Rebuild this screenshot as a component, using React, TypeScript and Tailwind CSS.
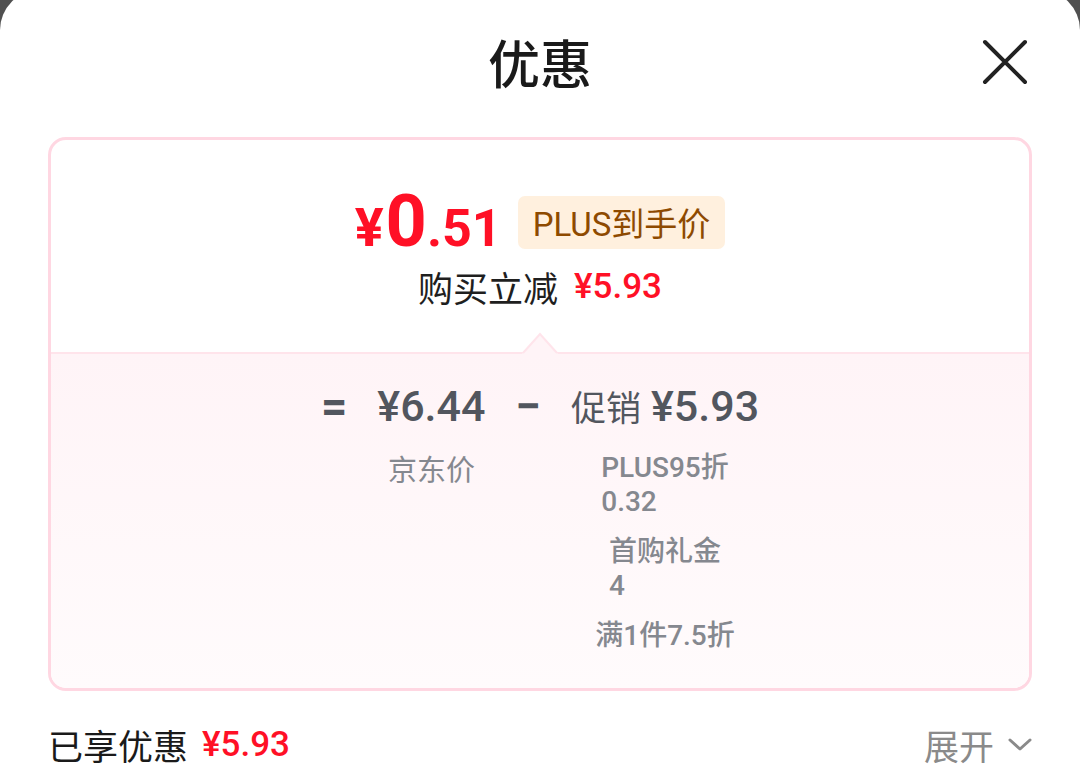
import React from "react";

const CJK = "font-['Noto_Sans_CJK_SC',sans-serif]";
const NUM = "font-['Roboto','Noto_Sans_CJK_SC',sans-serif]";

interface Discount {
  name: string;
  amount?: string;
}

const DISCOUNTS: Discount[] = [
  { name: "PLUS95折", amount: "0.32" },
  { name: "首购礼金", amount: "4" },
  { name: "满1件7.5折" },
];

function CloseIcon() {
  return (
    <svg width="48" height="48" viewBox="0 0 48 48" fill="none">
      <path d="M4 4 L44 44 M44 4 L4 44" stroke="#222" strokeWidth="4" strokeLinecap="round" />
    </svg>
  );
}

function Chevron() {
  return (
    <svg width="24" height="14" viewBox="0 0 24 14" fill="none">
      <path d="M2 2 L12 11 L22 2" stroke="#8a8a8a" strokeWidth="3" strokeLinecap="round" strokeLinejoin="round" />
    </svg>
  );
}

export default function App() {
  return (
    <div className="w-[1080px] h-[772px] bg-[#505050] overflow-hidden">
      <div className="-mt-[10px] h-[782px] bg-white rounded-t-[40px] flex flex-col">
        {/* header */}
        <div className="h-[144px] grid grid-cols-[1fr_auto_1fr] items-center">
          <div />
          <h1 className={`${CJK} text-[52px] leading-none text-[#1a1a1a] font-medium`}>优惠</h1>
          <div className="flex justify-end pr-[51px]">
            <CloseIcon />
          </div>
        </div>

        {/* card */}
        <div className="mt-[3px] mx-[48px] border-[3px] border-[#ffd7e2] rounded-[18px] overflow-hidden">
          <div className="h-[212px] flex flex-col items-center pt-[46px]">
            <div className="flex items-center">
              <span className={`${NUM} text-[#ff1026] font-bold flex items-baseline leading-none`}>
                <span className="text-[54px]">¥</span>
                <span className="text-[72px] ml-[2px]">0</span>
                <span className="text-[52px]">.51</span>
              </span>
              <span className={`${CJK} ml-[16px] h-[53px] px-[15px] rounded-[7px] bg-[#fff0de] text-[#8e4a00] text-[33px] leading-[53px]`}>
                <span className={NUM}>PLUS</span>到手价
              </span>
            </div>
            <div className="mt-[9px] flex items-center leading-[40px]">
              <span className={`${CJK} text-[35px] text-[#1f1f1f]`}>购买立减</span>
              <span className={`${NUM} ml-[16px] text-[35px] text-[#ff1026] font-medium`}>¥5.93</span>
            </div>
          </div>

          <div className="relative border-t-[2px] border-[#ffe4eb] bg-gradient-to-b from-[#fff4f7] to-[#fffbfc] pt-[26px] pb-[35px]">
            <svg className="absolute -top-[22px] left-1/2 -ml-[18px]" width="36" height="22" viewBox="0 0 36 22">
              <polygon points="0,22 18,2 36,22" fill="#fff4f7" />
              <polyline points="1,21 18,2 35,21" fill="none" stroke="#ffe4eb" strokeWidth="2" />
            </svg>
            <div className="flex justify-center items-start gap-[30px] text-[#52565e]">
              <span className={`${NUM} text-[46px] leading-[52px] font-bold`}>=</span>
              <div className="flex flex-col items-center">
                <span className={`${NUM} text-[43px] leading-[52px] font-medium`}>¥6.44</span>
                <span className={`${CJK} mt-[19px] text-[29px] leading-[34px] text-[#85888f]`}>京东价</span>
              </div>
              <span className={`${NUM} text-[46px] leading-[52px] font-bold`}>−</span>
              <div className="flex flex-col items-center">
                <span className="leading-[52px] flex items-baseline">
                  <span className={`${CJK} text-[35px]`}>促销</span>
                  <span className={`${NUM} ml-[10px] text-[43px] font-medium`}>¥5.93</span>
                </span>
                <div className="mt-[19px] flex flex-col items-center gap-[16px]">
                  {DISCOUNTS.map((d, i) => (
                    <div
                      key={i}
                      className={`${NUM} max-w-[140px] text-left text-[28px] leading-[34px] font-medium text-[#85888f]`}
                    >
                      <div>{d.name}</div>
                      {d.amount && <div>{d.amount}</div>}
                    </div>
                  ))}
                </div>
              </div>
            </div>
          </div>
        </div>

        {/* footer */}
        <div className="mt-[29px] px-[48px] h-[50px] flex items-center justify-between">
          <div className="flex items-center">
            <span className={`${CJK} text-[35px] text-[#1a1a1a]`}>已享优惠</span>
            <span className={`${NUM} ml-[14px] text-[35px] text-[#ff1026] font-medium`}>¥5.93</span>
          </div>
          <div className="flex items-center gap-[14px]">
            <span className={`${CJK} text-[35px] text-[#8a8a8a]`}>展开</span>
            <Chevron />
          </div>
        </div>
      </div>
    </div>
  );
}
